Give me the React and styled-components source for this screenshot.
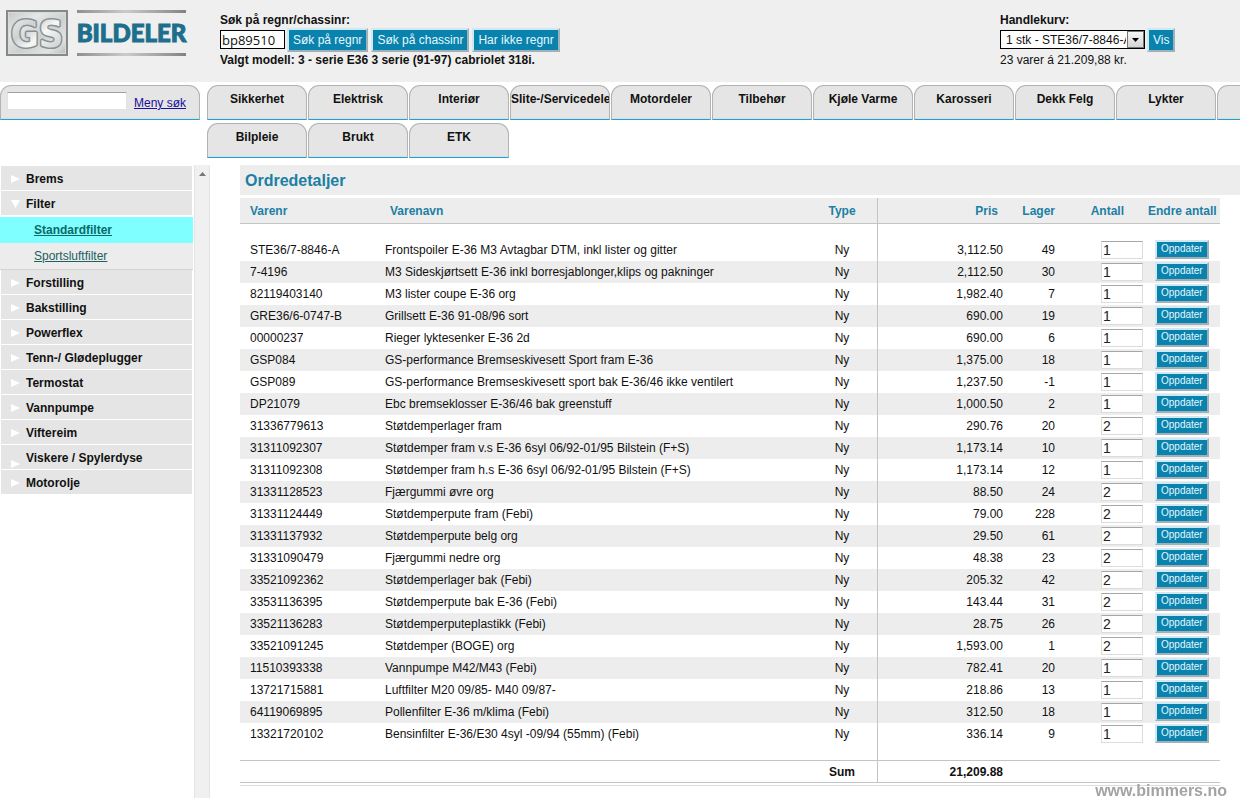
import React from "react";
import styled, { createGlobalStyle, css } from "styled-components";

const GlobalStyle = createGlobalStyle`
  *, *::before, *::after { box-sizing: border-box; }
  body {
    margin: 0;
    background: #fff;
    color: #111;
    font-family: "Liberation Sans", Arial, sans-serif;
    font-size: 12px;
    line-height: 14px;
  }
  input, button, select { font-family: inherit; margin: 0; }
`;

const Page = styled.div`
  display: flex;
  flex-direction: column;
  min-height: 100vh;
  overflow: hidden;
`;

/* ---------- header ---------- */

const Header = styled.header`
  display: flex;
  height: 82px;
  background: #efefef;
`;

const LogoLink = styled.a`
  display: flex;
  gap: 9px;
  width: 220px;
  padding: 10px 0 0 6px;
  text-decoration: none;
`;

const Wordmark = styled.span`
  display: flex;
  align-items: center;
  justify-content: center;
  width: 109px;
  height: 46px;
  border: solid #9a9d9d;
  border-width: 3px 0;
  border-image: linear-gradient(90deg, #8b8f8f, #c9cccc 45%, #7e8282) 1;
  color: #1d6f8c;
  font-family: Lato, "Liberation Sans", sans-serif;
  font-size: 24px;
  font-weight: 900;
  line-height: 40px;
  -webkit-text-stroke: 1px #1d6f8c;
`;

const HeaderBlock = styled.form`
  padding-top: 13px;
`;

const CartBlock = styled(HeaderBlock)`
  width: 240px;
  margin-left: auto;
`;

const Label = styled.label`
  display: block;
  font-weight: 700;
`;

const ControlRow = styled.div`
  display: flex;
  align-items: center;
  gap: 2px;
  height: 25px;
  margin-bottom: 1px;
`;

const StatusLine = styled.p`
  margin: 0;
  font-weight: ${(p) => (p.$strong ? 700 : 400)};
`;

const RegInput = styled.input`
  width: 65px;
  height: 19px;
  padding: 0 1px;
  border: 1px solid #000;
  background: #fff;
  color: #111;
  font-family: "Open Sans", "Noto Sans", sans-serif;
  font-size: 13px;
`;

const Button = styled.button`
  flex: none;
  height: 24px;
  padding: 0 4px;
  border: 2px solid;
  border-color: #cfe9f2 #9fb0b8 #9fb0b8 #cfe9f2;
  background: #0a82ae;
  color: #e4f8fd;
  font-size: 12px;
  line-height: 14px;
  cursor: pointer;
  ${(p) =>
    p.$small &&
    css`
      display: block;
      height: 19px;
      font-size: 10px;
      line-height: 12px;
    `}
`;

const SearchButtons = styled.div`
  display: flex;
  gap: 3px;
`;

const SelectWrap = styled.span`
  position: relative;
  width: 145px;
  height: 19px;
`;

const Select = styled.select`
  appearance: none;
  width: 100%;
  height: 100%;
  padding: 0 18px 0 5px;
  border: 1px solid #000;
  border-radius: 0;
  background: #fff;
  color: #111;
  font-size: 12px;
  text-overflow: clip;
`;

const SelectArrow = styled.span`
  position: absolute;
  top: 1px;
  right: 1px;
  display: flex;
  align-items: center;
  justify-content: center;
  width: 17px;
  height: 17px;
  border: 1px solid #777;
  background: linear-gradient(#f6f6f6, #d4d4d4);
  pointer-events: none;
`;

/* ---------- tab navigation ---------- */

const NavBar = styled.div`
  display: flex;
  gap: 7px;
  height: 83px;
  padding-top: 3px;
`;

const tabShape = css`
  border: 1px solid #b3b3b3;
  border-bottom: 1px solid #2f9cc2;
  border-radius: 11px 11px 0 0;
  background: #e5e5e5;
  box-shadow: inset 0 -1px #c4e6f3;
`;

const MenuSearch = styled.form`
  ${tabShape}
  flex: none;
  display: flex;
  align-items: flex-start;
  gap: 7px;
  width: 200px;
  height: 35px;
  padding: 6px 0 0 6px;
`;

const MenuInput = styled.input`
  width: 120px;
  height: 18px;
  padding: 0 3px;
  border: 1px solid #e2e2e2;
  border-top-color: #a0a0a0;
  background: #fff;
`;

const MenuLink = styled.a`
  padding-top: 4px;
  color: #1a0f9a;
`;

const TabRows = styled.nav`
  display: flex;
  flex-direction: column;
  gap: 3px;
  min-width: 0;
  overflow: hidden;
`;

const TabRow = styled.div`
  display: flex;
  gap: 1px;
`;

const Tab = styled.a`
  ${tabShape}
  flex: none;
  display: flex;
  width: 100px;
  height: 35px;
  padding-top: 6px;
  overflow: hidden;
  color: #111;
  font-weight: 700;
  text-decoration: none;
  white-space: nowrap;

  span { margin: 0 auto; }
`;

/* ---------- body ---------- */

const Body = styled.div`
  display: flex;
  flex: 1;
`;

const Sidebar = styled.aside`
  flex: none;
  display: flex;
  width: 210px;
  margin-right: 30px;
`;

const Menu = styled.ul`
  flex: 1;
  margin: 0;
  padding: 1px 1px 0 0;
  list-style: none;
`;

const MenuItem = styled.li`
  display: flex;
  align-items: ${(p) => (p.$wraps ? "flex-end" : "center")};
  gap: 5px;
  height: 24px;
  margin: 0 1px 1px;
  padding: 2px 0 0 9px;
  overflow: hidden;
  background: #e5e5e5;
`;

const MenuItemLink = styled.a`
  align-self: ${(p) => (p.$wraps ? "flex-start" : "center")};
  width: 140px;
  padding-top: ${(p) => (p.$wraps ? "4px" : "0")};
  color: #111;
  font-weight: 700;
  text-decoration: none;
`;

const SubMenu = styled.ul`
  margin: 2px 0 0;
  padding: 0;
  border-bottom: 1px solid #d2d2d2;
  background: #ececec;
  list-style: none;
`;

const SubItem = styled.li`
  height: 26px;
  padding: 6px 0 0 34px;
  background: ${(p) => (p.$active ? "#7fffff" : "transparent")};

  a {
    color: ${(p) => (p.$active ? "#0b6a6a" : "#20605f")};
    font-weight: ${(p) => (p.$active ? 700 : 400)};
  }
`;

const ScrollTrack = styled.div`
  width: 16px;
  padding: 7px 0 0 4px;
  border: solid #e4e4e4;
  border-width: 0 1px;
  background: #f0f0f0;
  line-height: 0;
`;

const Main = styled.main`
  flex: 1;
  min-width: 0;
`;

const Title = styled.h1`
  height: 30px;
  margin: 0 0 3px;
  padding-left: 5px;
  background: #ededed;
  color: #1c7fa3;
  font-size: 16px;
  line-height: 32px;
`;

const TableWrap = styled.div`
  margin-right: 20px;
  padding-bottom: 2px;
  border-bottom: 1px solid #dcdcdc;
`;

const Table = styled.table`
  width: 100%;
  border-collapse: separate;
  border-spacing: 0;
  table-layout: fixed;
`;

const Th = styled.th`
  height: 26px;
  padding: ${(p) => p.$pad || "0"};
  border-bottom: 1px solid #c4c4c4;
  border-right: ${(p) => (p.$divider ? "1px solid #c4c4c4" : "0")};
  background: #ededed;
  color: #1c7fa3;
  text-align: ${(p) => p.$align || "left"};
  white-space: nowrap;
`;

const Td = styled.td`
  height: 22px;
  padding: ${(p) => p.$pad || "0"};
  border-right: ${(p) => (p.$divider ? "1px solid #c4c4c4" : "0")};
  text-align: ${(p) => p.$align || "left"};
  white-space: nowrap;
`;

const ItemRow = styled.tr`
  background: ${(p) => (p.$shaded ? "#ededed" : "#fff")};
`;

const SpacerRow = styled.tr`
  td { height: 15px; }
`;

const SumRow = styled.tr`
  td {
    height: 23px;
    border-top: 1px solid #c4c4c4;
    border-bottom: 1px solid #c4c4c4;
    font-weight: 700;
  }
`;

const QtyInput = styled.input`
  display: block;
  width: 42px;
  height: 18px;
  padding: 0 1px;
  border: 1px solid #dcdcdc;
  border-top-color: #a6a6a6;
  background: #fff;
  color: #222;
  font-size: 14px;
`;

const Watermark = styled.div`
  position: fixed;
  right: 13px;
  bottom: 0;
  color: #a3a3a3;
  font-size: 16px;
  font-weight: 700;
  line-height: 14px;
`;

/* ---------- data ---------- */

const TABS = [
  ["Sikkerhet", "Elektrisk", "Interiør", "Slite-/Servicedeler", "Motordeler", "Tilbehør", "Kjøle Varme", "Karosseri", "Dekk Felg", "Lykter", ""],
  ["Bilpleie", "Brukt", "ETK"],
];

const MENU = [
  { name: "Brems" },
  { name: "Filter", children: ["Standardfilter", "Sportsluftfilter"] },
  { name: "Forstilling" },
  { name: "Bakstilling" },
  { name: "Powerflex" },
  { name: "Tenn-/ Glødeplugger" },
  { name: "Termostat" },
  { name: "Vannpumpe" },
  { name: "Viftereim" },
  { name: "Viskere / Spylerdyse", wraps: true },
  { name: "Motorolje" },
];

const ITEMS = [
  ["STE36/7-8846-A", "Frontspoiler E-36 M3 Avtagbar DTM, inkl lister og gitter", "3,112.50", 49, 1],
  ["7-4196", "M3 Sideskjørtsett E-36 inkl borresjablonger,klips og pakninger", "2,112.50", 30, 1],
  ["82119403140", "M3 lister coupe E-36 org", "1,982.40", 7, 1],
  ["GRE36/6-0747-B", "Grillsett E-36 91-08/96 sort", "690.00", 19, 1],
  ["00000237", "Rieger lyktesenker E-36 2d", "690.00", 6, 1],
  ["GSP084", "GS-performance Bremseskivesett Sport fram E-36", "1,375.00", 18, 1],
  ["GSP089", "GS-performance Bremseskivesett sport bak E-36/46 ikke ventilert", "1,237.50", -1, 1],
  ["DP21079", "Ebc bremseklosser E-36/46 bak greenstuff", "1,000.50", 2, 1],
  ["31336779613", "Støtdemperlager fram", "290.76", 20, 2],
  ["31311092307", "Støtdemper fram v.s E-36 6syl 06/92-01/95 Bilstein (F+S)", "1,173.14", 10, 1],
  ["31311092308", "Støtdemper fram h.s E-36 6syl 06/92-01/95 Bilstein (F+S)", "1,173.14", 12, 1],
  ["31331128523", "Fjærgummi øvre org", "88.50", 24, 2],
  ["31331124449", "Støtdemperpute fram (Febi)", "79.00", 228, 2],
  ["31331137932", "Støtdemperpute belg org", "29.50", 61, 2],
  ["31331090479", "Fjærgummi nedre org", "48.38", 23, 2],
  ["33521092362", "Støtdemperlager bak (Febi)", "205.32", 42, 2],
  ["33531136395", "Støtdemperpute bak E-36 (Febi)", "143.44", 31, 2],
  ["33521136283", "Støtdemperputeplastikk (Febi)", "28.75", 26, 2],
  ["33521091245", "Støtdemper (BOGE) org", "1,593.00", 1, 2],
  ["11510393338", "Vannpumpe M42/M43 (Febi)", "782.41", 20, 1],
  ["13721715881", "Luftfilter M20 09/85- M40 09/87-", "218.86", 13, 1],
  ["64119069895", "Pollenfilter E-36 m/klima (Febi)", "312.50", 18, 1],
  ["13321720102", "Bensinfilter E-36/E30 4syl -09/94 (55mm) (Febi)", "336.14", 9, 1],
];

/* ---------- drawings ---------- */

const BadgeText = styled.text`
  font-family: "DejaVu Sans Condensed", "Liberation Sans", sans-serif;
  font-size: 38px;
  font-weight: 700;
  text-anchor: middle;
  fill: url(#face);
  stroke: #8a9090;
  stroke-width: 3px;
  stroke-linejoin: bevel;
  paint-order: stroke;
`;

function GsBadge() {
  return (
    <svg width="62" height="46" viewBox="0 0 62 46" overflow="visible" aria-hidden="true">
      <defs>
        <linearGradient id="plate" x1="0" y1="0" x2="1" y2="1">
          <stop offset="0" stopColor="#c2c6c6" />
          <stop offset="0.3" stopColor="#e6e8e8" />
          <stop offset="0.55" stopColor="#cdd0d0" />
          <stop offset="0.8" stopColor="#e2e4e4" />
          <stop offset="1" stopColor="#b2b6b6" />
        </linearGradient>
        <linearGradient id="face" x1="0" y1="0" x2="1" y2="1">
          <stop offset="0" stopColor="#f4f5f5" />
          <stop offset="0.35" stopColor="#cdd1d1" />
          <stop offset="0.55" stopColor="#f6f7f7" />
          <stop offset="1" stopColor="#bcc0c0" />
        </linearGradient>
      </defs>
      <rect x="1" y="1" width="60" height="44" fill="url(#plate)" stroke="#858989" strokeWidth="2" />
      <rect x="2.5" y="2.5" width="57" height="41" fill="none" stroke="#d9dbdb" />
      <BadgeText x="31" y="37">GS</BadgeText>
    </svg>
  );
}

function Marker({ open }) {
  return (
    <svg width="11" height="10" viewBox="0 0 11 10" aria-hidden="true">
      <path d={open ? "M1 1H10L5.500 9Z" : "M1 1L10 5L1 9Z"} fill="#fff" />
    </svg>
  );
}

/* ---------- page ---------- */

export default function App() {
  return (
    <Page>
      <GlobalStyle />
      <Header>
        <LogoLink href="#" aria-label="GS Bildeler">
          <GsBadge />
          <Wordmark>BILDELER</Wordmark>
        </LogoLink>
        <HeaderBlock onSubmit={(e) => e.preventDefault()}>
          <Label htmlFor="regnr">Søk på regnr/chassinr:</Label>
          <ControlRow>
            <RegInput id="regnr" defaultValue="bp89510" />
            <SearchButtons>
              <Button>Søk på regnr</Button>
              <Button>Søk på chassinr</Button>
              <Button>Har ikke regnr</Button>
            </SearchButtons>
          </ControlRow>
          <StatusLine $strong>Valgt modell: 3 - serie E36 3 serie (91-97) cabriolet 318i.</StatusLine>
        </HeaderBlock>
        <CartBlock onSubmit={(e) => e.preventDefault()}>
          <Label htmlFor="cart">Handlekurv:</Label>
          <ControlRow>
            <SelectWrap>
              <Select id="cart">
                <option>1 stk - STE36/7-8846-A</option>
              </Select>
              <SelectArrow>
                <svg width="7" height="4" viewBox="0 0 7 4" aria-hidden="true">
                  <path d="M0 0H7L3.500 4Z" fill="#000" />
                </svg>
              </SelectArrow>
            </SelectWrap>
            <Button>Vis</Button>
          </ControlRow>
          <StatusLine>23 varer á 21.209,88 kr.</StatusLine>
        </CartBlock>
      </Header>

      <NavBar>
        <MenuSearch onSubmit={(e) => e.preventDefault()}>
          <MenuInput aria-label="Meny søk" />
          <MenuLink href="#">Meny søk</MenuLink>
        </MenuSearch>
        <TabRows>
          {TABS.map((row, i) => (
            <TabRow key={i}>
              {row.map((name) => (
                <Tab key={name} href="#"><span>{name}</span></Tab>
              ))}
            </TabRow>
          ))}
        </TabRows>
      </NavBar>

      <Body>
        <Sidebar>
          <Menu>
            {MENU.map((item) => (
              <React.Fragment key={item.name}>
                <MenuItem $wraps={item.wraps}>
                  <Marker open={!!item.children} />
                  <MenuItemLink href="#" $wraps={item.wraps}>{item.name}</MenuItemLink>
                </MenuItem>
                {item.children && (
                  <li>
                    <SubMenu>
                      {item.children.map((child, i) => (
                        <SubItem key={child} $active={i === 0}>
                          <a href="#">{child}</a>
                        </SubItem>
                      ))}
                    </SubMenu>
                  </li>
                )}
              </React.Fragment>
            ))}
          </Menu>
          <ScrollTrack>
            <svg width="7" height="4" viewBox="0 0 7 4" aria-hidden="true">
              <path d="M0 4H7L3.500 0Z" fill="#777" />
            </svg>
          </ScrollTrack>
        </Sidebar>

        <Main>
          <Title>Ordredetaljer</Title>
          <TableWrap>
            <Table>
              <colgroup>
                <col style={{ width: 135 }} />
                <col />
                <col style={{ width: 71 }} />
                <col style={{ width: 130 }} />
                <col style={{ width: 52 }} />
                <col style={{ width: 88 }} />
                <col style={{ width: 72 }} />
              </colgroup>
              <thead>
                <tr>
                  <Th $pad="0 0 0 10px">Varenr</Th>
                  <Th $pad="0 0 0 15px">Varenavn</Th>
                  <Th $align="center" $divider>Type</Th>
                  <Th $align="right" $pad="0 10px 0 0">Pris</Th>
                  <Th $align="right" $pad="0 5px 0 0">Lager</Th>
                  <Th $align="right" $pad="0 24px 0 0">Antall</Th>
                  <Th>Endre antall</Th>
                </tr>
              </thead>
              <tbody>
                <SpacerRow>
                  <Td colSpan={3} $divider />
                  <Td colSpan={4} />
                </SpacerRow>
                {ITEMS.map(([nr, name, price, stock, qty], i) => (
                  <ItemRow key={nr} $shaded={i % 2 === 1}>
                    <Td $pad="0 0 0 10px">{nr}</Td>
                    <Td $pad="0 0 0 10px">{name}</Td>
                    <Td $align="center" $divider>Ny</Td>
                    <Td $align="right" $pad="0 5px 0 0">{price}</Td>
                    <Td $align="right" $pad="0 5px 0 0">{stock}</Td>
                    <Td $pad="0 0 0 41px">
                      <QtyInput defaultValue={qty} aria-label={`Antall ${nr}`} />
                    </Td>
                    <Td $pad="0 0 2px 7px">
                      <Button $small>Oppdater</Button>
                    </Td>
                  </ItemRow>
                ))}
                <SpacerRow>
                  <Td colSpan={3} $divider />
                  <Td colSpan={4} />
                </SpacerRow>
              </tbody>
              <tfoot>
                <SumRow>
                  <Td colSpan={2} />
                  <Td $align="center" $divider>Sum</Td>
                  <Td $align="right" $pad="0 5px 0 0">21,209.88</Td>
                  <Td colSpan={3} />
                </SumRow>
              </tfoot>
            </Table>
          </TableWrap>
        </Main>
      </Body>
      <Watermark>www.bimmers.no</Watermark>
    </Page>
  );
}
